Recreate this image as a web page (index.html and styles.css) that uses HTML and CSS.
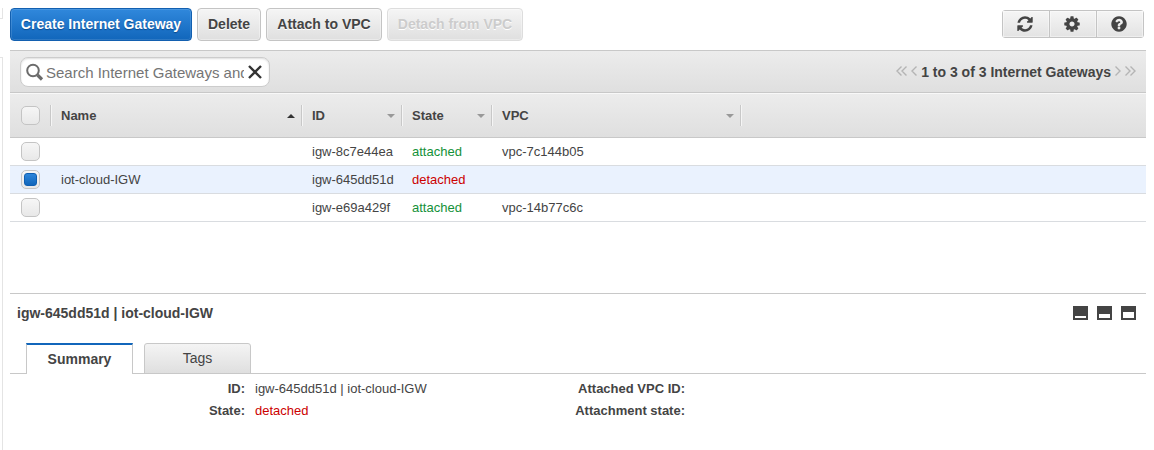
FILE: index.html
```html
<!DOCTYPE html>
<html lang="en">
<head>
<meta charset="utf-8">
<title>Internet Gateways</title>
<link rel="stylesheet" href="styles.css">
</head>
<body>
<div class="app">
  <aside class="rail"><div class="rail-top"></div><div class="rail-body"></div></aside>
  <main class="main">
    <div class="toolbar">
      <button class="btn primary"><span>Create Internet Gateway</span></button>
      <button class="btn w-delete"><span>Delete</span></button>
      <button class="btn w-attach"><span>Attach to VPC</span></button>
      <button class="btn disabled w-detach"><span>Detach from VPC</span></button>
      <div class="icon-group">
        <span class="icon-btn"><svg width="18" height="18" viewBox="0 0 1792 1792"><path d="M1639 1056q0 5-1 7-64 268-268 434.5t-478 166.5q-146 0-282.5-55t-243.5-157l-129 129q-19 19-45 19t-45-19-19-45v-448q0-26 19-45t45-19h448q26 0 45 19t19 45-19 45l-137 137q71 66 161 102t187 36q134 0 250-65t186-179q11-17 53-117 8-23 30-23h192q13 0 22.500 9.500t9.500 22.500zm25-800v448q0 26-19 45t-45 19h-448q-26 0-45-19t-19-45 19-45l138-138q-148-137-349-137-134 0-250 65t-186 179q-11 17-53 117-8 23-30 23h-199q-13 0-22.500-9.500t-9.500-22.500v-7q65-268 270-434.500t480-166.500q146 0 284 55.500t245 156.500l130-129q19-19 45-19t45 19 19 45z"/></svg></span>
        <span class="icon-btn"><svg width="18" height="18" viewBox="0 0 1792 1792"><path d="M1152 896q0-106-75-181t-181-75-181 75-75 181 75 181 181 75 181-75 75-181zm512-109v222q0 12-8 23t-20 13l-185 28q-19 54-39 91 35 50 107 138 10 12 10 25t-9 23q-27 37-99 108t-94 71q-12 0-26-9l-138-108q-44 23-91 38-16 136-29 186-7 28-36 28h-222q-14 0-24.500-8.500t-11.500-21.500l-28-184q-49-16-90-37l-141 107q-10 9-25 9-14 0-25-11-126-114-165-168-7-10-7-23 0-12 8-23 15-21 51-66.500t54-70.500q-27-50-41-99l-183-27q-13-2-21-12.500t-8-23.500v-222q0-12 8-23t19-13l186-28q14-46 39-92-40-57-107-138-10-12-10-24 0-10 9-23 26-36 98.500-107.500t94.500-71.500q13 0 26 10l138 107q44-23 91-38 16-136 29-186 7-28 36-28h222q14 0 24.500 8.500t11.500 21.500l28 184q49 16 90 37l142-107q9-9 24-9 13 0 25 10 129 119 165 170 7 8 7 22 0 12-8 23-15 21-51 66.500t-54 70.500q26 50 41 98l183 28q13 2 21 12.500t8 23.500z"/></svg></span>
        <span class="icon-btn"><svg width="18" height="18" viewBox="0 0 1792 1792"><path d="M1024 1376v-192q0-14-9-23t-23-9h-192q-14 0-23 9t-9 23v192q0 14 9 23t23 9h192q14 0 23-9t9-23zm256-672q0-88-55.500-163t-138.500-116-170-41q-243 0-371 213-15 24 8 42l132 100q7 6 19 6 16 0 25-12 53-68 86-92 34-24 86-24 48 0 85.500 26t37.500 59q0 38-20 61t-68 45q-63 28-115.500 86.500t-52.500 125.500v36q0 14 9 23t23 9h192q14 0 23-9t9-23q0-19 21.500-49.500t54.500-49.500q32-18 49-28.500t46-35 44.500-48 28-60.500 12.500-81zm384 192q0 209-103 385.500t-279.500 279.500-385.500 103-385.500-103-279.500-279.500-103-385.500 103-385.500 279.500-279.500 385.500-103 385.500 103 279.500 279.500 103 385.500z"/></svg></span>
      </div>
    </div>

    <div class="filter-bar">
      <div class="search">
        <svg class="lens" width="18" height="18" viewBox="0 0 18 18"><circle cx="7" cy="7.500" r="5.800"/><path d="M11.500 12L16 16.500" class="handle"/></svg>
        <span class="placeholder">Search Internet Gateways and</span>
        <svg class="clear" width="14" height="14" viewBox="0 0 14 14"><path d="M1 1L13 13M13 1L1 13"/></svg>
      </div>
      <div class="pager">
        <svg width="22" height="12" viewBox="0 0 22 12"><path d="M5.500 0.500L1 5L5.500 9.500M10.500 0.500L6 5L10.500 9.500M20.500 0.500L16 5L20.500 9.500"/></svg>
        <span class="pager-text">1 to 3 of 3 Internet Gateways</span>
        <svg width="22" height="12" viewBox="0 0 22 12"><path d="M1.500 0.500L6 5L1.500 9.500M11.500 0.500L16 5L11.500 9.500M16.500 0.500L21 5L16.500 9.500"/></svg>
      </div>
    </div>

    <div class="grid-row head">
      <div class="cell pick"><span class="box"></span></div>
      <div class="cell">Name<i class="up"></i></div>
      <div class="cell">ID<i class="down"></i></div>
      <div class="cell">State<i class="down"></i></div>
      <div class="cell">VPC<i class="down"></i></div>
    </div>
    <div class="grid-row">
      <div class="cell pick"><span class="box"></span></div>
      <div class="cell"></div>
      <div class="cell">igw-8c7e44ea</div>
      <div class="cell green">attached</div>
      <div class="cell">vpc-7c144b05</div>
    </div>
    <div class="grid-row selected">
      <div class="cell pick"><span class="box checked"></span></div>
      <div class="cell">iot-cloud-IGW</div>
      <div class="cell">igw-645dd51d</div>
      <div class="cell red">detached</div>
      <div class="cell"></div>
    </div>
    <div class="grid-row">
      <div class="cell pick"><span class="box"></span></div>
      <div class="cell"></div>
      <div class="cell">igw-e69a429f</div>
      <div class="cell green">attached</div>
      <div class="cell">vpc-14b77c6c</div>
    </div>

    <section class="detail">
      <div class="detail-head">
        <span class="detail-title">igw-645dd51d | iot-cloud-IGW</span>
        <svg width="64" height="14" viewBox="0 0 64 14"><path fill="#444" d="M0 0h15v14H0zM24 0h15v14H24zM48 0h15v14H48z"/><path fill="#fff" d="M2 10h11v2H2zM26 8h11v4H26zM50 6h11v6H50z"/></svg>
      </div>
      <div class="tabs">
        <div class="tab active">Summary</div>
        <div class="tab">Tags</div>
      </div>
      <div class="facts">
        <b>ID:</b><span>igw-645dd51d | iot-cloud-IGW</span><b>Attached VPC ID:</b>
        <b>State:</b><span class="red">detached</span><b>Attachment state:</b>
      </div>
    </section>
  </main>
</div>
</body>
</html>
```
FILE: styles.css
```css
*, *::before { box-sizing: border-box; }
body {
  margin: 0;
  background: #fff;
  color: #444;
  font: 13px/16px "Liberation Sans", Arial, sans-serif;
}
.app { display: flex; height: 450px; overflow: hidden; }
.rail { width: 10px; padding-top: 8px; flex: none; }
.rail-top { width: 3px; height: 11px; border: solid #e4e4e4; border-width: 0 1px 1px 0; }
.rail-body { width: 3px; height: 393px; margin-top: 38px; border: solid #e4e4e4; border-width: 1px 1px 0 0; }
.main { width: 1136px; }

.toolbar { display: flex; gap: 5px; height: 50px; padding: 8px 2px 0 0; }
.btn {
  height: 33px;
  padding: 0;
  border: 1px solid #c4c4c4;
  border-radius: 4px;
  background: linear-gradient(#f5f5f5, #dfdfdf);
  box-shadow: inset 0 0 0 1px rgba(255, 255, 255, .35);
  color: #444;
  font: bold 14px/29px "Liberation Sans", Arial, sans-serif;
  text-shadow: 0 1px 0 #fff;
  white-space: nowrap;
}
.btn span { display: block; }
.primary {
  width: 182px;
  border-color: #1360b0;
  background: linear-gradient(#3088dc, #1166bb);
  box-shadow: inset 0 0 0 1px rgba(255, 255, 255, .12);
  color: #fff;
  text-shadow: 0 1px 1px #0b4a8c;
}
.w-delete { width: 64px; }
.w-attach { width: 116px; }
.w-detach { width: 136px; }
.disabled { color: #ccc; border-color: #ddd; }
.icon-group {
  display: flex;
  width: 142px;
  height: 28px;
  margin: 2px 0 0 auto;
  border: 1px solid #c4c4c4;
  border-radius: 3px;
}
.icon-btn {
  flex: 1;
  display: flex;
  align-items: center;
  justify-content: center;
  padding-right: 2px;
  background: linear-gradient(#f5f5f5, #e3e3e3);
  box-shadow: inset 0 0 0 1px rgba(255, 255, 255, .4);
}
.icon-btn + .icon-btn { border-left: 1px solid #c4c4c4; }
.icon-btn svg { fill: #444; }

.filter-bar {
  display: flex;
  align-items: center;
  justify-content: space-between;
  height: 43px;
  padding: 0 10px;
  border: solid #c8c8c8;
  border-width: 1px 0;
  background: linear-gradient(#ececec, #dfdfdf);
}
.search {
  display: flex;
  align-items: center;
  width: 250px;
  height: 30px;
  padding: 0 6px 0 5px;
  border: 1px solid #ccc;
  border-radius: 8px;
  background: #fff;
  box-shadow: inset 0 1px 2px #ddd;
}
.lens { flex: none; fill: none; stroke: #6b6b6b; stroke-width: 2; }
.handle { stroke-width: 3.200; }
.placeholder {
  width: 198px;
  margin-left: 2px;
  padding-top: 2px;
  overflow: hidden;
  color: #757575;
  font-size: 15px;
  line-height: 20px;
  white-space: nowrap;
}
.clear { flex: none; margin-left: 4px; fill: none; stroke: #333; stroke-width: 2.400; }
.pager { display: flex; align-items: center; gap: 3px; font-weight: bold; font-size: 14px; }
.pager svg { fill: none; stroke: #b4b4b4; stroke-width: 1.400; }
.pager-text { white-space: nowrap; }

.grid-row {
  display: grid;
  grid-template-columns: 41px 251px 100px 90px 249px;
  height: 28px;
  border-bottom: 1px solid #d9dce0;
}
.cell { display: flex; align-items: center; padding-left: 10px; white-space: nowrap; }
.pick { padding-left: 11px; }
.selected { background: #eaf2fe; }
.green { color: #149139; }
.red { color: #c00; }
.head {
  height: 45px;
  align-items: center;
  border-top: 1px solid #f8f8f8;
  border-bottom-color: #c8c8c8;
  background: linear-gradient(#ececec, #dfdfdf);
  font-weight: bold;
}
.head .cell { height: 21px; border-right: 1px solid #c8c8c8; box-shadow: 1px 0 0 #f5f5f5; }
.head i { margin: 0 6px 0 auto; border: solid transparent; border-width: 0 4px; }
.head .up { border-bottom: 4px solid #333; }
.head .down { border-top: 4px solid #999; }
.box {
  flex: none;
  width: 19px;
  height: 19px;
  border: 1px solid #c4c4c4;
  border-radius: 5px;
  background: linear-gradient(#f6f6f6, #e8e8e8);
}
.checked { padding: 2px; }
.checked::before {
  content: "";
  display: block;
  width: 13px;
  height: 13px;
  border: 1px solid #0f5fb2;
  border-radius: 3px;
  background: linear-gradient(#2e86da, #1166bb);
}

.detail { margin-top: 71px; border-top: 1px solid #c8c8c8; }
.detail-head {
  display: flex;
  align-items: center;
  justify-content: space-between;
  height: 39px;
  padding: 0 9px 2px 7px;
}
.detail-title { font-weight: bold; font-size: 14px; }
.tabs {
  display: flex;
  gap: 11px;
  height: 41px;
  padding: 10px 0 0 16px;
  box-shadow: inset 0 -1px 0 #c8c8c8;
}
.tab {
  width: 107px;
  border: 1px solid #c8c8c8;
  border-radius: 3px 3px 0 0;
  background: linear-gradient(#f4f4f4, #dfdfdf);
  font-size: 14px;
  line-height: 29px;
  text-align: center;
}
.active {
  border-top: 2px solid #1166bb;
  border-bottom: 0;
  border-radius: 0;
  background: #fff;
  font-weight: bold;
}
.facts {
  display: grid;
  grid-template-columns: 235px 290px 130px;
  grid-auto-rows: 22px;
  column-gap: 10px;
  padding-top: 4px;
  line-height: 22px;
  white-space: nowrap;
}
.facts b { text-align: right; }
```
